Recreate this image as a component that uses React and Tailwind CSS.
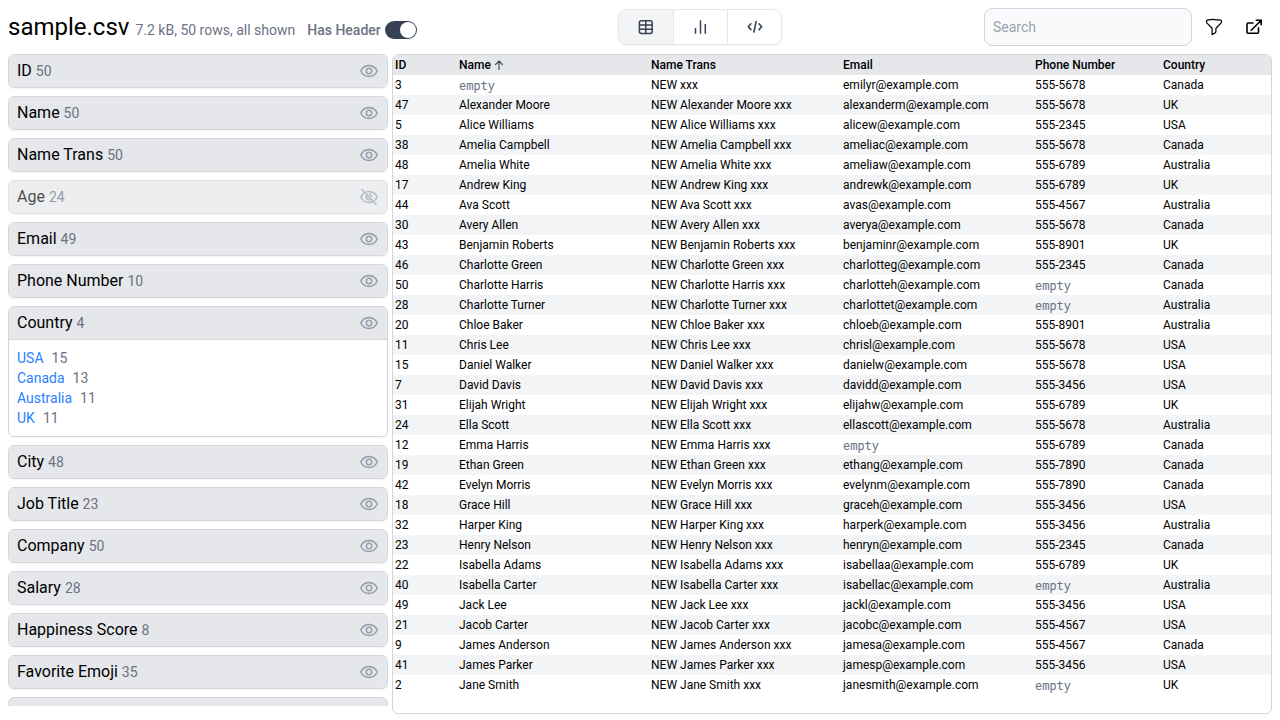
import { HiOutlineFunnel } from "react-icons/hi2";

const rows = `3||emilyr|5678|Canada
47|Alexander Moore|alexanderm|5678|UK
5|Alice Williams|alicew|2345|USA
38|Amelia Campbell|ameliac|5678|Canada
48|Amelia White|ameliaw|6789|Australia
17|Andrew King|andrewk|6789|UK
44|Ava Scott|avas|4567|Australia
30|Avery Allen|averya|5678|Canada
43|Benjamin Roberts|benjaminr|8901|UK
46|Charlotte Green|charlotteg|2345|Canada
50|Charlotte Harris|charlotteh||Canada
28|Charlotte Turner|charlottet||Australia
20|Chloe Baker|chloeb|8901|Australia
11|Chris Lee|chrisl|5678|USA
15|Daniel Walker|danielw|5678|USA
7|David Davis|davidd|3456|USA
31|Elijah Wright|elijahw|6789|UK
24|Ella Scott|ellascott|5678|Australia
12|Emma Harris||6789|Canada
19|Ethan Green|ethang|7890|Canada
42|Evelyn Morris|evelynm|7890|Canada
18|Grace Hill|graceh|3456|USA
32|Harper King|harperk|3456|Australia
23|Henry Nelson|henryn|2345|Canada
22|Isabella Adams|isabellaa|6789|UK
40|Isabella Carter|isabellac||Australia
49|Jack Lee|jackl|3456|USA
21|Jacob Carter|jacobc|4567|USA
9|James Anderson|jamesa|4567|Canada
41|James Parker|jamesp|3456|USA
2|Jane Smith|janesmith||UK`
  .split("\n")
  .map((line) => {
    const [id, name, user, phone, country] = line.split("|");
    return [
      id,
      name,
      name ? `NEW ${name} xxx` : "NEW xxx",
      user && `${user}@example.com`,
      phone && `555-${phone}`,
      country,
    ];
  });

const columns = [
  ["ID", 50],
  ["Name", 50],
  ["Name Trans", 50],
  ["Age", 24],
  ["Email", 49],
  ["Phone Number", 10],
  ["Country", 4],
  ["City", 48],
  ["Job Title", 23],
  ["Company", 50],
  ["Salary", 28],
  ["Happiness Score", 8],
  ["Favorite Emoji", 35],
];

const countries = [["USA", 15], ["Canada", 13], ["Australia", 11], ["UK", 11]];

const grid = "grid grid-cols-[64px_192px_192px_192px_128px_1fr] h-5 pl-0.5 text-xs leading-5";

function Icon({ children, className = "", width = 1.5, cap = "round" }) {
  return (
    <svg
      width="20"
      height="20"
      viewBox="0 0 20 20"
      fill="none"
      stroke="currentColor"
      strokeWidth={width}
      strokeLinecap={cap}
      strokeLinejoin="round"
      className={`shrink-0 ${className}`}
    >
      {children}
    </svg>
  );
}

const TableIcon = () => (
  <Icon cap="butt">
    <rect x="3.4" y="3.8" width="12.8" height="12.6" rx="1.8" />
    <path d="M3.4 8h12.8M3.4 12.2h12.8M9.8 3.8v12.6" />
  </Icon>
);

const BarsIcon = () => (
  <Icon cap="butt">
    <path d="M4.5 11v5.8M9.5 3.3v13.5M14.3 7v9.8" />
  </Icon>
);

const CodeIcon = () => (
  <Icon width={1.6}>
    <path d="M5.9 6.8 3.3 9.7l2.6 2.9M14 6.8l2.7 2.9-2.7 2.9M11.1 4.6 8.9 15" />
  </Icon>
);

const ExternalIcon = ({ className }) => (
  <Icon className={className} width={1.6}>
    <path d="M9 6H4.4C3.6 6 3 6.6 3 7.4v7.5c0 .8.6 1.4 1.4 1.4h8.7c.8 0 1.4-.6 1.4-1.4v-4" />
    <path d="M7.2 13.2 17.2 3.2M12.3 3.2h4.9v4.6" />
  </Icon>
);

const EyeIcon = () => (
  <Icon className="text-gray-400" width={1.6}>
    <path d="M1.8 10C3.4 6.5 6.5 4.6 10 4.6s6.600 1.900 8.200 5.400c-1.600 3.500-4.700 5.400-8.200 5.400S3.400 13.500 1.800 10Z" />
    <circle cx="10" cy="10" r="2.7" />
  </Icon>
);

const EyeOffIcon = () => (
  <Icon className="text-gray-400" width={1.6}>
    <path d="M8 4.800c.7-.1 1.300-.2 2-.2 3.500 0 6.600 1.900 8.200 5.400-.6 1.300-1.400 2.400-2.400 3.300M5 6.100C3.700 7 2.600 8.300 1.800 10c1.600 3.500 4.700 5.400 8.200 5.400 1.400 0 2.700-.3 3.900-.8" />
    <path d="M8 8.200a2.700 2.700 0 0 0 3.800 3.800M10.600 7.400a2.700 2.700 0 0 1 2 2M3 2.500l14 15" />
  </Icon>
);

function ColumnCard({ name, count }) {
  const hidden = name === "Age";
  const open = name === "Country";
  return (
    <div className={`shrink-0 overflow-hidden rounded-md border border-gray-300 shadow-xs ${hidden ? "opacity-70" : ""}`}>
      <div className={`flex h-8 items-center justify-between bg-gray-200 px-2 ${open ? "box-content border-b border-gray-300" : ""}`}>
        <div className="leading-6">
          {name} <span className="text-sm text-gray-500">{count}</span>
        </div>
        {hidden ? <EyeOffIcon /> : <EyeIcon />}
      </div>
      {open && (
        <div className="px-2 py-2 text-sm leading-5">
          {countries.map(([c, n]) => (
            <div key={c} className="flex gap-2">
              <span className="text-[#2b7fff]">{c}</span>
              <span className="text-gray-500">{n}</span>
            </div>
          ))}
        </div>
      )}
    </div>
  );
}

export default function App() {
  return (
    <div className="flex h-[720px] w-[1280px] flex-col overflow-hidden bg-white font-['Roboto',sans-serif] text-black">
      <header className="grid h-[54px] shrink-0 grid-cols-[610px_1fr] pl-2 pr-2">
        <div className="flex items-baseline pt-[11px]">
          <h1 className="text-2xl leading-8">sample.csv</h1>
          <span className="ml-1.5 text-sm text-gray-500">7.2 kB, 50 rows, all shown</span>
          <span className="ml-3 text-sm font-medium text-gray-500">Has Header</span>
          <span className="mt-[10px] ml-1 flex h-[18px] w-8 justify-end self-start rounded-full bg-gray-700 p-px">
            <span className="size-4 rounded-full bg-white" />
          </span>
        </div>
        <div className="flex items-start justify-between pt-2">
          <div className="mt-px flex h-9 w-[164px] overflow-hidden rounded-lg border border-gray-200 text-gray-700 shadow-xs">
            <button className="flex w-[55px] items-center justify-center border-r border-gray-200 bg-gray-100"><TableIcon /></button>
            <button className="flex w-[54px] items-center justify-center border-r border-gray-200"><BarsIcon /></button>
            <button className="flex flex-1 items-center justify-center"><CodeIcon /></button>
          </div>
          <div className="flex items-center">
            <input placeholder="Search" className="h-[38px] w-52 rounded-lg border border-gray-300 bg-gray-50 px-2 text-sm placeholder:text-gray-400" />
            <HiOutlineFunnel size={20} className="ml-3" />
            <ExternalIcon className="mr-2 ml-5" />
          </div>
        </div>
      </header>
      <main className="flex min-h-0 flex-1 gap-1 px-2">
        <aside className="flex h-[652px] w-[380px] shrink-0 flex-col gap-2 overflow-hidden">
          {columns.map(([name, count]) => (
            <ColumnCard key={name} name={name} count={count} />
          ))}
          <div className="h-[34px] shrink-0 rounded-md border border-gray-300 bg-gray-200" />
        </aside>
        <section className="h-[660px] flex-1 overflow-hidden rounded-md border border-gray-300">
          <div className={`${grid} bg-gray-200 font-medium`}>
            <span>ID</span>
            <span className="flex items-center gap-0.5">
              Name
              <svg width="12" height="12" viewBox="0 0 12 12" fill="none" stroke="currentColor" strokeWidth="1.1" strokeLinecap="round" strokeLinejoin="round" className="text-gray-700">
                <path d="M6 10.500V2.200M2.500 5.600 6 2l3.500 3.600" />
              </svg>
            </span>
            <span>Name Trans</span>
            <span>Email</span>
            <span>Phone Number</span>
            <span>Country</span>
          </div>
          {rows.map((row, i) => (
            <div key={row[0]} className={`${grid} ${i % 2 ? "bg-gray-100" : "bg-white"}`}>
              {row.map((cell, j) =>
                cell ? (
                  <span key={j}>{cell}</span>
                ) : (
                  <span key={j} className="font-['Roboto_Mono','Liberation_Mono',monospace] text-gray-500">empty</span>
                )
              )}
            </div>
          ))}
        </section>
      </main>
    </div>
  );
}
